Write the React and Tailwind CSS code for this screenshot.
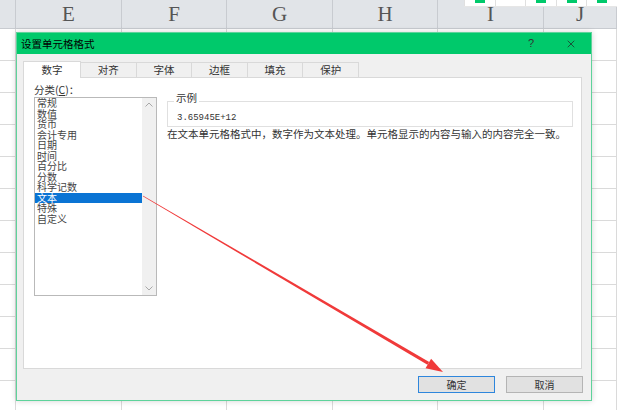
import { X } from 'lucide-react';

const cols = [
  { id: 'D', w: 'w-[16px]' },
  { id: 'E', w: 'w-[106px]' },
  { id: 'F', w: 'w-[105px]' },
  { id: 'G', w: 'w-[106px]' },
  { id: 'H', w: 'w-[105px]' },
  { id: 'I', w: 'w-[106px]' },
  { id: 'J', w: 'flex-1' },
];

const tabs = ['数字', '对齐', '字体', '边框', '填充', '保护'];

const categories = ['常规', '数值', '货币', '会计专用', '日期', '时间', '百分比', '分数', '科学记数', '文本', '特殊', '自定义'];

const cjk = { fontFamily: '"Noto Sans CJK SC", "Noto Sans", sans-serif' };

function Sheet() {
  return (
    <div className="flex flex-col">
      {/* column headers */}
      <div className="flex h-[29px] bg-[#e1e4e8] border-b border-[#c8cbd0]">
        {cols.map((c) => (
          <div
            key={c.id}
            className={`${c.w} border-r border-[#c8cbd0] flex items-center justify-center text-[21px] leading-none text-[#555]`}
            style={{ fontFamily: '"Liberation Serif", serif' }}
          >
            {c.id === 'D' ? '' : c.id}
          </div>
        ))}
      </div>
      {/* rows */}
      {Array.from({ length: 12 }).map((_, r) => (
        <div key={r} className="flex h-[32px] border-b border-[#dadada]">
          {cols.map((c) => (
            <div key={c.id} className={`${c.w} border-r border-[#dadada]`} />
          ))}
        </div>
      ))}
    </div>
  );
}

function Chevron({ up }) {
  return (
    <svg width="8" height="5" viewBox="0 0 8 5">
      <polyline
        points={up ? '0.5,4.5 4,1 7.5,4.5' : '0.5,0.5 4,4 7.5,0.5'}
        fill="none"
        stroke="#a8a8a8"
        strokeWidth="1"
      />
    </svg>
  );
}

function Dialog() {
  return (
    <div
      className="absolute left-[16px] top-[32px] w-[576px] h-[369px] flex flex-col bg-[#f0f0f0] border border-[#5ed39b] shadow-[0_0_6px_rgba(0,0,0,0.18)]"
      style={cjk}
    >
      {/* title bar */}
      <div className="h-[21px] bg-[#00c96b] flex items-center pl-[4px] pr-[14px] text-[10.5px] text-black">
        <span className="flex-1">设置单元格格式</span>
        <span className="text-[11px] text-[#333] mr-[31px]" style={{ fontFamily: '"Liberation Sans", sans-serif' }}>?</span>
        <X size={12} strokeWidth={1.4} color="#222" />
      </div>

      {/* tabs */}
      <div className="flex items-end mt-[6px] ml-[6px] h-[17px] text-[10.5px] text-[#333]">
        {tabs.map((t, i) =>
          i === 0 ? (
            <div key={t} className="w-[58px] h-[17px] bg-white border border-b-0 border-[#d9d9d9] flex items-center justify-center relative z-10 -mb-px pb-px">
              {t}
            </div>
          ) : (
            <div key={t} className="w-[55.6px] h-[15px] border border-b-0 border-l-0 border-[#d9d9d9] flex items-center justify-center">
              {t}
            </div>
          )
        )}
      </div>

      {/* panel */}
      <div className="ml-[6px] mr-[9px] h-[292px] bg-white border border-[#d9d9d9] flex pl-[10px] pt-[6px]">
        <div className="w-[123px] flex flex-col">
          <div className="text-[10.5px] leading-[12px] text-[#333]">
            分类(<span className="underline">C</span>)：
          </div>
          <div className="mt-[1px] h-[199px] border border-[#b9b9b9] flex">
            <div className="flex-1 flex flex-col text-[10px] leading-[10.5px] text-[#444]">
              {categories.map((c) => (
                <div key={c} className={c === '文本' ? 'h-[10.5px] bg-[#0a74d4] text-white pl-[2px]' : 'h-[10.5px] pl-[2px]'}>
                  {c}
                </div>
              ))}
            </div>
            <div className="w-[14px] bg-[#f0f0f0] flex flex-col items-center justify-between py-[4px]">
              <Chevron up />
              <Chevron />
            </div>
          </div>
        </div>

        <div className="ml-[10px] w-[406px] flex flex-col mt-[8px]">
          <fieldset className="border border-[#e0e0e0] pb-[1px]">
            <legend className="ml-[6px] px-[2px] pb-[8px] text-[10.5px] leading-[11px] text-[#333]">示例</legend>
            <div className="pl-[9px] text-[9px] leading-[14px] text-[#333]" style={{ fontFamily: '"Liberation Mono", monospace' }}>
              3.65945E+12
            </div>
          </fieldset>
          <div className="mt-[1px] text-[10.5px] leading-[12px] text-[#333] whitespace-nowrap">
            在文本单元格格式中，数字作为文本处理。单元格显示的内容与输入的内容完全一致。
          </div>
        </div>
      </div>

      {/* buttons */}
      <div className="flex justify-end gap-[11px] mt-[7px] mr-[8px] text-[10px] text-[#333]">
        <button className="w-[77px] h-[17px] bg-[#e1e1e1] border border-[#2e86dc] flex items-center justify-center">确定</button>
        <button className="w-[77px] h-[17px] bg-[#e1e1e1] border border-[#b4b4b4] flex items-center justify-center">取消</button>
      </div>
    </div>
  );
}

function Arrow() {
  const sx = 143, sy = 196, tx = 443, ty = 372;
  const dx = tx - sx, dy = ty - sy;
  const len = Math.hypot(dx, dy);
  const ux = dx / len, uy = dy / len;
  const px = -uy, py = ux;
  const bx = tx - 17 * ux, by = ty - 17 * uy;
  const line = [
    [sx + px * 0.4, sy + py * 0.4],
    [bx + px * 1.7, by + py * 1.7],
    [bx - px * 1.7, by - py * 1.7],
    [sx - px * 0.4, sy - py * 0.4],
  ];
  const head = [
    [tx, ty],
    [bx + px * 5.5, by + py * 5.5],
    [bx - px * 5.5, by - py * 5.5],
  ];
  const pts = (a) => a.map((p) => p.join(',')).join(' ');
  return (
    <svg className="absolute inset-0 pointer-events-none" width="617" height="410">
      <polygon points={pts(line)} fill="#f03a3a" />
      <polygon points={pts(head)} fill="#f03a3a" />
    </svg>
  );
}

export default function App() {
  return (
    <div className="relative w-[617px] h-[410px] overflow-hidden bg-white">
      <Sheet />

      {/* partly hidden toolbar strip */}
      <div className="absolute top-0 left-[464px] right-0 h-[7px] bg-white flex border-b border-[#e6e6e6]">
        {['#00c96b', '', '#00c96b', '#00c96b', '#00c96b'].map((g, i) => (
          <div key={i} className="w-[33px] border-l border-[#e0e0e0] flex justify-center items-start">
            {g && <div className="w-[10px] h-[3px] bg-[#00c96b]" />}
          </div>
        ))}
      </div>

      <Dialog />
      <Arrow />
    </div>
  );
}
